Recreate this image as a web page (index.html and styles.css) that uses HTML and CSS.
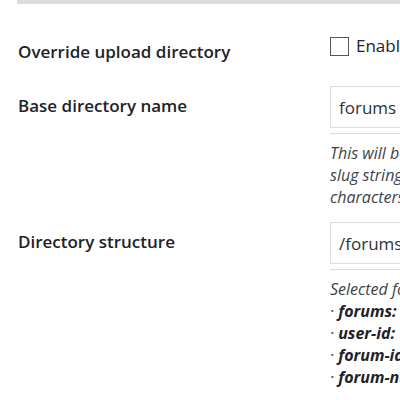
FILE: index.html
```html
<!DOCTYPE html>
<html>
<head>
    <title>Upload settings</title>
    <link rel="stylesheet" href="styles.css">
</head>
<body>
    <div class="topbar"></div>

    <div class="settings">
        <div class="row first">
            <div class="label">Override upload directory</div>
            <div class="field">
                <label class="check">
                    <span class="box"></span>
                    <span>Enable custom upload directory</span>
                </label>
            </div>
        </div>

        <div class="row">
            <div class="label">Base directory name</div>
            <div class="field">
                <input type="text" class="text" value="forums">
                <p class="desc">
                    This will be the name of the base directory for uploads.<br>
                    slug string without spaces and special<br>
                    characters is recommended.
                </p>
            </div>
        </div>

        <div class="row">
            <div class="label">Directory structure</div>
            <div class="field">
                <input type="text" class="text" value="/forums/user-id/forum-id/">
                <p class="desc">
                    Selected format uses these parts:<br>
                    &middot; <b>forums:</b> base directory name<br>
                    &middot; <b>user-id:</b> ID of the uploading user<br>
                    &middot; <b>forum-id:</b> ID of the forum<br>
                    &middot; <b>forum-name:</b> slug of the forum
                </p>
            </div>
        </div>
    </div>
</body>
</html>
```

FILE: styles.css
```css
html, body {
    margin: 0;
    overflow: hidden;
}
body {
    font-family: "Open Sans", "Noto Sans", sans-serif;
    color: #1d2327;
    background: #fff;
    width: 900px;
}
.topbar {
    margin-left: 17px;
    height: 4px;
    background-color: #dcdcde;
}
.settings {
    padding: 23px 0 0 18px;
}
.row {
    display: grid;
    grid-template-columns: 312px 560px;
    padding: 6px 0 8px;
}
.row.first {
    padding-bottom: 16px;
}
.label {
    font-size: 17px;
    font-weight: 600;
    line-height: 24px;
    padding-top: 8px;
}
.row.first .label {
    padding-top: 7px;
}
.field {
    font-size: 17px;
}
.check {
    display: flex;
    align-items: center;
    gap: 7px;
    line-height: 24px;
    padding-top: 1px;
}
.box {
    width: 17px;
    height: 17px;
    border: 1.5px solid #50575e;
}
.text {
    display: block;
    box-sizing: border-box;
    width: 400px;
    height: 42px;
    padding: 0 8px;
    font-family: inherit;
    font-size: 17px;
    color: #2c3338;
    border: 1px solid #dcdcde;
    border-radius: 0;
    margin: 0;
}
.desc {
    margin: 5px 0 0;
    padding-top: 8px;
    border-top: 1px solid #dcdcde;
    font-size: 16px;
    font-style: italic;
    line-height: 22px;
    color: #3c434a;
}
.desc b {
    color: #1d2327;
}
```
